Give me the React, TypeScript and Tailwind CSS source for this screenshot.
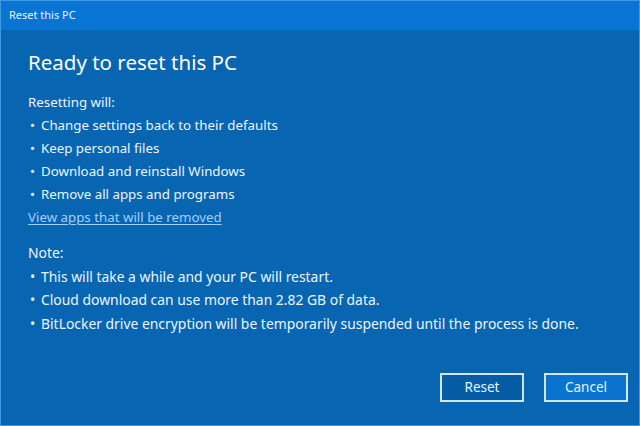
export default function App() {
  const will = [
    'Change settings back to their defaults',
    'Keep personal files',
    'Download and reinstall Windows',
    'Remove all apps and programs',
  ]
  const notes = [
    'This will take a while and your PC will restart.',
    'Cloud download can use more than 2.82 GB of data.',
    'BitLocker drive encryption will be temporarily suspended until the process is done.',
  ]

  return (
    <div
      className="w-[640px] h-[426px] flex flex-col bg-[#0865b2] border border-[#3d9be3] text-[#eef5fc] overflow-hidden"
      style={{ fontFamily: '"Noto Sans", "Open Sans", sans-serif' }}
    >
      <div className="h-[29px] shrink-0 bg-[#0a74d2] flex items-center px-2 text-[11px] text-[#e8f3ff]">
        Reset this PC
      </div>
      <div className="flex-1 flex flex-col pl-[27px] pr-[11px] pt-[17px] pb-[23px]">
        <h1 className="text-[20.5px] leading-[30px] font-normal text-white">Ready to reset this PC</h1>
        <div className="mt-[14px] text-[13.3px] leading-[23px]">
          <p>Resetting will:</p>
          <ul>
            {will.map((t) => (
              <li key={t} className="flex">
                <span className="w-[13px] pl-[2px]">•</span>
                <span>{t}</span>
              </li>
            ))}
          </ul>
          <a className="text-[#9fd0ff] underline underline-offset-2 decoration-1 cursor-pointer">
            View apps that will be removed
          </a>
        </div>
        <div className="mt-[12px] text-[13.9px] leading-[23.5px]">
          <p>Note:</p>
          <ul>
            {notes.map((t) => (
              <li key={t} className="flex">
                <span className="w-[13px] pl-[2px]">•</span>
                <span>{t}</span>
              </li>
            ))}
          </ul>
        </div>
        <div className="mt-auto flex justify-end gap-[20px]">
          <button
            type="button"
            className="w-[84px] h-[29px] bg-[#075ca6] border-2 border-[#cfe6fb] text-[13.5px] text-[#e9f4ff]"
          >
            Reset
          </button>
          <button
            type="button"
            className="w-[84px] h-[29px] bg-[#0a72cf] border-2 border-[#cfe6fb] text-[13.5px] text-[#e9f4ff]"
          >
            Cancel
          </button>
        </div>
      </div>
    </div>
  )
}
